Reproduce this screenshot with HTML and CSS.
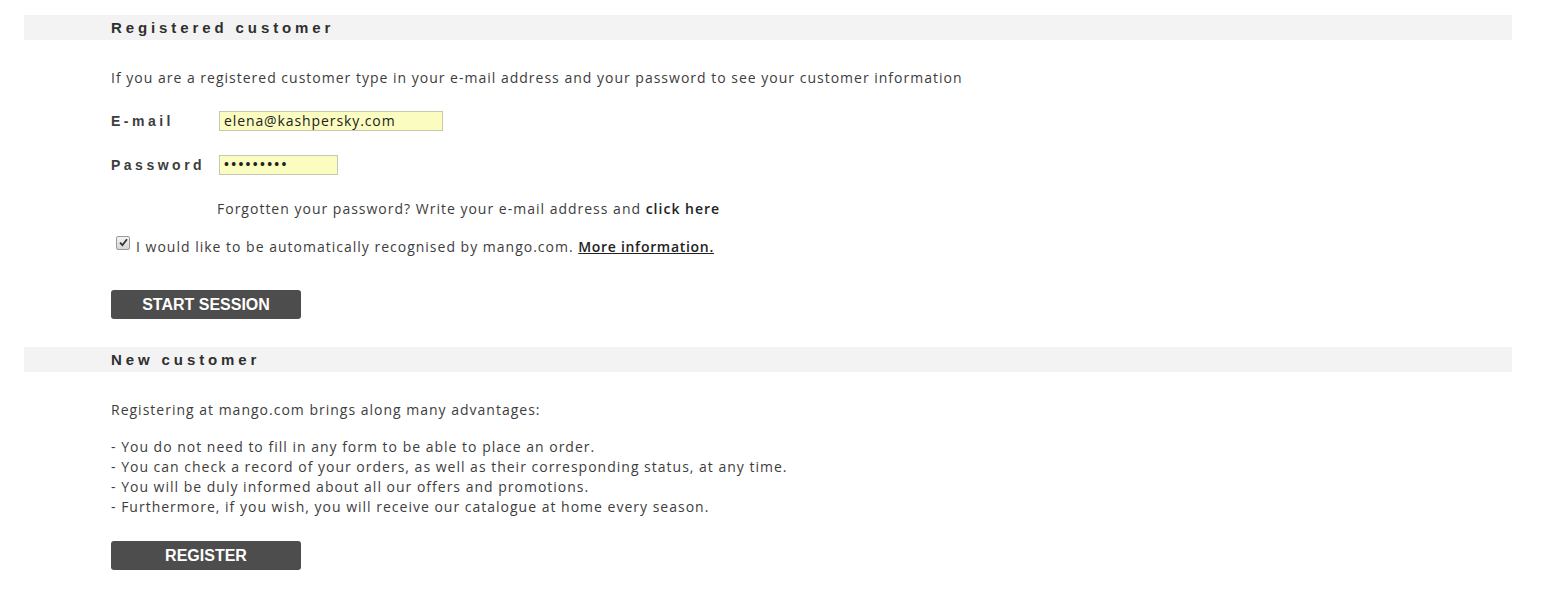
FILE: index.html
```html
<!DOCTYPE html>
<html>
<head>
<meta charset="utf-8">
<link rel="stylesheet" href="styles.css">
</head>
<body>
<div class="page">
  <section class="block">
    <h2 class="bar">Registered customer</h2>
    <div class="content">
      <p class="intro">If you are a registered customer type in your e-mail address and your password to see your customer information</p>
      <div class="row">
        <label class="label">E-mail</label>
        <div class="input email">elena@kashpersky.com</div>
      </div>
      <div class="row">
        <label class="label">Password</label>
        <div class="input pass">&#8226;&#8226;&#8226;&#8226;&#8226;&#8226;&#8226;&#8226;&#8226;</div>
      </div>
      <p class="forgot">Forgotten your password? Write your e-mail address and <b>click here</b></p>
      <div class="check-row">
        <span class="checkbox"><svg width="9" height="9" viewBox="0 0 9 9"><path d="M1 4.6 L3.4 7.2 L8 1.2" fill="none" stroke="#333" stroke-width="1.8"/></svg></span>
        <span>I would like to be automatically recognised by mango.com. <a class="more">More information.</a></span>
      </div>
      <button class="btn start">START SESSION</button>
    </div>
  </section>
  <section class="block">
    <h2 class="bar">New customer</h2>
    <div class="content">
      <p class="intro2">Registering at mango.com brings along many advantages:</p>
      <ul class="list">
        <li>- You do not need to fill in any form to be able to place an order.</li>
        <li>- You can check a record of your orders, as well as their corresponding status, at any time.</li>
        <li>- You will be duly informed about all our offers and promotions.</li>
        <li>- Furthermore, if you wish, you will receive our catalogue at home every season.</li>
      </ul>
      <button class="btn register">REGISTER</button>
    </div>
  </section>
</div>
</body>
</html>
```

FILE: styles.css
```css
html, body {
  margin: 0;
  padding: 0;
  background: #fff;
}
body {
  font-family: "Open Sans", "DejaVu Sans", sans-serif;
  color: #3d3d3d;
  font-size: 14px;
}
.page {
  padding: 15px 52px 0 24px;
  width: 1488px;
}
.bar {
  margin: 0;
  height: 25px;
  line-height: 25px;
  background: #f3f3f3;
  padding-left: 87px;
  font-family: "Liberation Sans", Arial, sans-serif;
  font-weight: bold;
  font-size: 15px;
  letter-spacing: 3.9px;
  color: #2f2f2f;
}
.content {
  padding-left: 87px;
}
p { margin: 0; }
.intro, .intro2, .forgot, .check-row, .list {
  letter-spacing: 1px;
}
.intro {
  margin-top: 28px;
  line-height: 20px;
}
.row {
  display: flex;
  align-items: center;
  height: 20px;
  margin-top: 23px;
}
.row + .row { margin-top: 24px; }
.label {
  width: 108px;
  font-family: "Liberation Sans", Arial, sans-serif;
  font-weight: bold;
  font-size: 14px;
  letter-spacing: 3.5px;
  color: #3d3d3d;
}
.input {
  box-sizing: border-box;
  height: 20px;
  border: 1px solid #c8c8b0;
  background: #fbfcc0;
  font-size: 14px;
  line-height: 18px;
  padding-left: 4px;
  color: #222;
  letter-spacing: 0.9px;
}
.email { width: 224px; }
.pass {
  width: 119px;
  font-size: 13px;
  font-weight: bold;
  letter-spacing: 2.3px;
  line-height: 17px;
}
.forgot {
  margin-top: 24px;
  padding-left: 106px;
  line-height: 20px;
}
.forgot b { font-weight: 600; color: #222; }
.check-row {
  margin-top: 17px;
  display: flex;
  align-items: center;
  height: 20px;
}
.checkbox {
  box-sizing: border-box;
  width: 14px;
  height: 14px;
  margin-left: 5px;
  margin-right: 6px;
  margin-top: -7px;
  border: 1px solid #9a9a9a;
  border-radius: 2px;
  background: linear-gradient(#f4f4f4, #d6d6d6);
  display: flex;
  align-items: center;
  justify-content: center;
}
.more {
  color: #222;
  font-weight: 600;
  text-decoration: underline;
  letter-spacing: 0.7px;
}
.btn {
  display: block;
  width: 190px;
  height: 29px;
  border: 0;
  border-radius: 3px;
  background: #4d4d4d;
  color: #fff;
  font-family: "Liberation Sans", Arial, sans-serif;
  font-weight: bold;
  font-size: 16px;
  padding: 0;
}
.start { margin-top: 34px; margin-bottom: 28px; }
.intro2 {
  margin-top: 28px;
  line-height: 20px;
}
.list {
  list-style: none;
  margin: 17px 0 0;
  padding: 0;
}
.list li { line-height: 20px; }
.register { margin-top: 24px; }
```
